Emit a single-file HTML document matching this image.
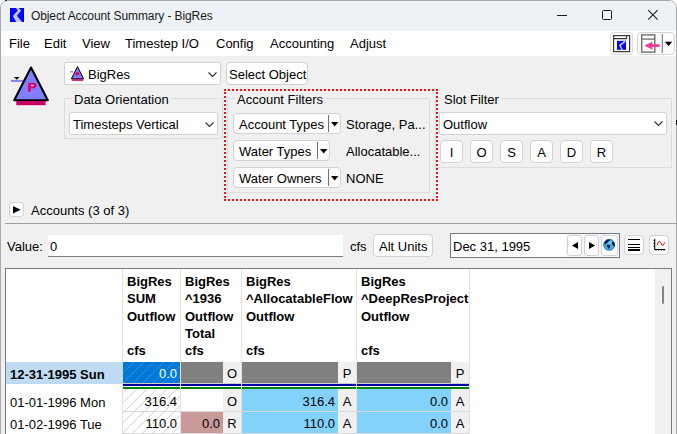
<!DOCTYPE html>
<html><head><meta charset="utf-8">
<style>
*{box-sizing:border-box;margin:0;padding:0}
html,body{width:677px;height:434px;overflow:hidden;background:#ffffff}
body{position:relative;font-family:"Liberation Sans",sans-serif;font-size:13px;color:#000}
.a{position:absolute}
.t{position:absolute;white-space:nowrap;line-height:16px}
#win{position:absolute;left:0;top:0;width:677px;height:460px;border:1px solid #aaaaaa;border-radius:8px 8px 0 0;overflow:hidden;background:#f0f0f0}
#title{position:absolute;left:0;top:0;width:677px;height:30px;background:#eef2f6}
#menu{position:absolute;left:0;top:30px;width:677px;height:25px;background:#ffffff}
.btn{position:absolute;background:#fdfdfd;border:1px solid #d2d2d2;border-radius:4px}
.cb{position:absolute;background:#ffffff;border:1px solid #d2d2d2;border-radius:2px}
.grp{position:absolute;border:1px solid #dcdcdc;}
.lbl{position:absolute;background:#f0f0f0;padding:0 2px;white-space:nowrap;line-height:16px}
.chev{position:absolute;width:9px;height:5px}
</style></head><body>
<div id="win">
  <div id="title"></div>
  <div id="menu"></div>
</div>
<div class="a" style="left:5px;top:0px;width:2px;height:1px;background:#222"></div>
<!-- title icon -->
<svg class="a" style="left:10px;top:8px" width="14" height="14" viewBox="0 0 14 14">
  <rect width="14" height="14" fill="#0000ff"/>
  <path d="M5.9 0 L8.7 0 L11.2 2.6 L6.9 7.7 L12.2 14 L6.2 14 L3.1 8.6 Q2.9 7.6 3.6 6.9 L7.8 2.6 Z" fill="#c4c4ff"/>
</svg>
<div class="t" style="left:31px;top:8px;font-size:12px;color:#1a1a1a;letter-spacing:-0.1px">Object Account Summary - BigRes</div>
<!-- window controls -->
<div class="a" style="left:557px;top:15px;width:10px;height:1px;background:#1a1a1a"></div>
<div class="a" style="left:602px;top:10px;width:10px;height:10px;border:1px solid #1a1a1a;border-radius:1.5px"></div>
<svg class="a" style="left:647px;top:9px" width="12" height="12" viewBox="0 0 12 12"><path d="M1.2 1.2 L10.6 10.6 M10.6 1.2 L1.2 10.6" stroke="#1a1a1a" stroke-width="1.05"/></svg>

<!-- menu -->
<div class="t" style="left:9px;top:36px">File</div>
<div class="t" style="left:44px;top:36px">Edit</div>
<div class="t" style="left:82px;top:36px">View</div>
<div class="t" style="left:125px;top:36px">Timestep I/O</div>
<div class="t" style="left:216px;top:36px">Config</div>
<div class="t" style="left:270px;top:36px">Accounting</div>
<div class="t" style="left:350px;top:36px">Adjust</div>

<!-- toolbar icons -->
<div class="a" style="left:610px;top:32px;width:23px;height:23px;border:1px solid #dedede;border-radius:3px;background:#fafafa"></div>
<svg class="a" style="left:613px;top:35px" width="18" height="18" viewBox="0 0 18 18">
  <rect x="0.6" y="0.6" width="16" height="16" fill="#fff" stroke="#3a3a3a" stroke-width="1.2"/>
  <path d="M0.6 3.6 H13.6 V0.6" fill="none" stroke="#3a3a3a" stroke-width="1.1"/>
  <rect x="4" y="5.8" width="9" height="9" fill="#0000ff"/>
  <path d="M10.5 5.6 L11.6 6.9 L6.9 10.3 L9.3 15" fill="none" stroke="#c8c8ff" stroke-width="1.5"/>
</svg>
<div class="a" style="left:637px;top:32px;width:38px;height:23px;border:1px solid #d4d4d4;border-radius:4px;background:#fbfbfb"></div>
<svg class="a" style="left:640px;top:34px" width="34" height="20" viewBox="0 0 34 20">
  <rect x="1.7" y="0.9" width="13.1" height="17.2" fill="#fff" stroke="#6e6e6e" stroke-width="1.4"/>
  <path d="M1.7 5.1 H14.8" stroke="#6e6e6e" stroke-width="1.3"/>
  <path d="M4.3 11.6 L12.4 7.8 L12.4 10.2 L19.6 10.2 L19.6 13.1 L12.4 13.1 L12.4 15.7 Z" fill="#e8409a"/>
  <path d="M22.3 0 V19" stroke="#7a7a7a" stroke-width="1.1"/>
  <path d="M24.8 7.8 L32.3 7.8 L28.55 12 Z" fill="#000"/>
</svg>

<!-- reservoir icon -->
<svg class="a" style="left:10px;top:62px" width="44" height="46" viewBox="0 0 44 46">
  <path d="M1 18.9 H13" stroke="#8080ff" stroke-width="2"/>
  <path d="M4 15 L9.5 15 L6.8 17.8 Z" fill="#000"/>
  <path d="M21 5.5 L37.8 38.2 L4.2 38.2 Z" fill="#8080ff" stroke="#000" stroke-width="2.1" stroke-linejoin="round"/>
  <rect x="6.3" y="39" width="29.3" height="4.2" fill="#cc0066"/>
  <path d="M18.1 20.7 H23.8 Q26.4 20.7 26.4 23.4 Q26.4 26.2 23.8 26.2 H20.8 V29.7 H18.1 Z" fill="#e0006a"/>
  <path d="M20.8 22.7 H23.2 Q24 22.7 24 23.5 Q24 24.3 23.2 24.3 H20.8 Z" fill="#e8e8ff"/>
</svg>

<!-- BigRes combobox -->
<div class="cb" style="left:64px;top:62px;width:157px;height:23px"></div>
<svg class="a" style="left:70px;top:66px" width="15" height="15" viewBox="0 0 15 15">
  <path d="M0 5.8 H3.2" stroke="#9090ff" stroke-width="1.4"/>
  <path d="M7.5 0.6 L13.6 12.8 L1.4 12.8 Z" fill="#8080ff" stroke="#000" stroke-width="1" stroke-linejoin="round"/>
  <rect x="1.8" y="13.2" width="11.4" height="1.6" fill="#cc0066"/>
  <path d="M6.3 10 V6.8 H8.4 Q9.3 7.4 8.4 8.4 H6.3" fill="none" stroke="#e0006a" stroke-width="1.2"/>
</svg>
<div class="t" style="left:88px;top:67px">BigRes</div>
<svg class="chev" style="left:208px;top:72px" viewBox="0 0 9 5"><path d="M0.5 0.5 L4.5 4.5 L8.5 0.5" fill="none" stroke="#383838" stroke-width="1.2"/></svg>

<div class="btn" style="left:226px;top:62px;width:82px;height:23px"></div>
<div class="t" style="left:229px;top:67px">Select Object</div>

<!-- Data Orientation group -->
<div class="grp" style="left:64px;top:98px;width:159px;height:41px"></div>
<div class="lbl" style="left:72px;top:92px">Data Orientation</div>
<div class="cb" style="left:69px;top:112px;width:149px;height:23px"></div>
<div class="t" style="left:73px;top:117px">Timesteps Vertical</div>
<svg class="chev" style="left:205px;top:122px" viewBox="0 0 9 5"><path d="M0.5 0.5 L4.5 4.5 L8.5 0.5" fill="none" stroke="#383838" stroke-width="1.2"/></svg>

<!-- red dotted -->
<div class="a" style="left:224px;top:89px;width:214px;height:112px;border:2px dotted #ff0a0a"></div>

<!-- Account Filters group -->
<div class="grp" style="left:227px;top:98px;width:203px;height:95px"></div>
<div class="lbl" style="left:235px;top:92px">Account Filters</div>

<div class="btn" style="left:233px;top:113px;width:108px;height:21px"></div>
<div class="t" style="left:239px;top:117px">Account Types</div>
<div class="a" style="left:328px;top:115px;width:1px;height:17px;background:#707070"></div>
<svg class="a" style="left:331px;top:122px" width="8" height="5" viewBox="0 0 8 5"><path d="M0 0 H7.4 L3.7 4.4 Z" fill="#000"/></svg>
<div class="t" style="left:346px;top:117px">Storage, Pa...</div>

<div class="btn" style="left:233px;top:140px;width:97px;height:21px"></div>
<div class="t" style="left:239px;top:144px">Water Types</div>
<div class="a" style="left:317px;top:142px;width:1px;height:17px;background:#707070"></div>
<svg class="a" style="left:320px;top:149px" width="8" height="5" viewBox="0 0 8 5"><path d="M0 0 H7.4 L3.7 4.4 Z" fill="#000"/></svg>
<div class="t" style="left:346px;top:144px">Allocatable...</div>

<div class="btn" style="left:233px;top:167px;width:108px;height:21px"></div>
<div class="t" style="left:239px;top:171px">Water Owners</div>
<div class="a" style="left:328px;top:169px;width:1px;height:17px;background:#707070"></div>
<svg class="a" style="left:331px;top:176px" width="8" height="5" viewBox="0 0 8 5"><path d="M0 0 H7.4 L3.7 4.4 Z" fill="#000"/></svg>
<div class="t" style="left:346px;top:171px">NONE</div>

<!-- Slot Filter group -->
<div class="grp" style="left:435px;top:98px;width:237px;height:70px"></div>
<div class="lbl" style="left:442px;top:92px">Slot Filter</div>
<div class="cb" style="left:439px;top:112px;width:228px;height:23px"></div>
<div class="t" style="left:443px;top:117px">Outflow</div>
<svg class="chev" style="left:654px;top:121px" viewBox="0 0 9 5"><path d="M0.5 0.5 L4.5 4.5 L8.5 0.5" fill="none" stroke="#383838" stroke-width="1.2"/></svg>
<div class="btn" style="left:440px;top:140px;width:23px;height:23px"></div><div class="t" style="left:440px;top:145px;width:23px;text-align:center">I</div>
<div class="btn" style="left:470px;top:140px;width:23px;height:23px"></div><div class="t" style="left:470px;top:145px;width:23px;text-align:center">O</div>
<div class="btn" style="left:500px;top:140px;width:23px;height:23px"></div><div class="t" style="left:500px;top:145px;width:23px;text-align:center">S</div>
<div class="btn" style="left:530px;top:140px;width:23px;height:23px"></div><div class="t" style="left:530px;top:145px;width:23px;text-align:center">A</div>
<div class="btn" style="left:560px;top:140px;width:23px;height:23px"></div><div class="t" style="left:560px;top:145px;width:23px;text-align:center">D</div>
<div class="btn" style="left:590px;top:140px;width:23px;height:23px"></div><div class="t" style="left:590px;top:145px;width:23px;text-align:center">R</div>

<!-- Accounts -->
<div class="btn" style="left:9px;top:202px;width:15px;height:15px;border-radius:3px"></div>
<svg class="a" style="left:13px;top:206px" width="8" height="8" viewBox="0 0 8 8"><path d="M0 0 L7.6 3.8 L0 7.6 Z" fill="#000"/></svg>
<div class="t" style="left:31px;top:203px">Accounts (3 of 3)</div>
<div class="a" style="left:5px;top:223px;width:672px;height:1px;background:#a0a0a0"></div>

<!-- Value row -->
<div class="t" style="left:7px;top:239px">Value:</div>
<div class="a" style="left:47px;top:234px;width:297px;height:23px;background:#fff;border:1px solid #eeeeee;border-bottom:1px solid #7c7c7c;border-radius:2px"></div>
<div class="t" style="left:50px;top:239px">0</div>
<div class="t" style="left:350px;top:239px">cfs</div>
<div class="btn" style="left:373px;top:234px;width:60px;height:23px"></div>
<div class="t" style="left:379px;top:239px">Alt Units</div>

<div class="a" style="left:450px;top:233px;width:170px;height:25px;background:#fff;border:1px solid #737b87"></div>
<div class="t" style="left:453px;top:239px">Dec 31, 1995</div>
<div class="a" style="left:566px;top:234px;width:53px;height:23px;background:#f6f6f6"></div>
<div class="btn" style="left:567px;top:235px;width:15px;height:21px;border-radius:3px"></div>
<svg class="a" style="left:572px;top:242px" width="6" height="7" viewBox="0 0 6 7"><path d="M6 0 L0 3.5 L6 7 Z" fill="#000"/></svg>
<div class="btn" style="left:584px;top:235px;width:15px;height:21px;border-radius:3px"></div>
<svg class="a" style="left:589px;top:242px" width="6" height="7" viewBox="0 0 6 7"><path d="M0 0 L6 3.5 L0 7 Z" fill="#000"/></svg>
<div class="btn" style="left:601px;top:235px;width:17px;height:21px;border-radius:3px"></div>
<svg class="a" style="left:603px;top:239px" width="12" height="12" viewBox="0 0 12 12">
  <circle cx="6.1" cy="5.8" r="5.9" fill="#3fb2d6"/>
  <path d="M4.5 2 Q7 1.2 9 2.4 Q9.6 4.6 8.4 5.6 Q6.4 5.4 5 4.4 Z" fill="#6cd4ea" opacity="0.8"/>
  <path d="M1.2 4.6 Q1.6 2.4 3.6 1.2 Q5.6 0.3 7.8 0.8 Q6.2 1.8 5.4 2.8 Q4 3.4 3.4 4.6 Q2.4 5.2 1.2 4.6 Z" fill="#0b0b52"/>
  <path d="M8.6 3.2 Q10.6 2.4 11.6 4.2 Q12.3 6.2 11.5 7.4 Q10.2 7 9.4 5.6 Q8.6 4.6 8.6 3.2 Z" fill="#0b0b52"/>
  <path d="M3.6 6 Q5.4 5.3 7.1 6.2 Q7.4 7.6 6.7 8.4 Q6.2 9.5 5.6 9.9 Q5.1 8.6 4.5 7.8 Q3.7 7 3.6 6 Z" fill="#0b0b52"/>
  <circle cx="6.1" cy="5.8" r="5.5" fill="none" stroke="#14206a" stroke-width="0.8" opacity="0.45"/>
</svg>
<div class="btn" style="left:624px;top:235px;width:20px;height:20px"></div>
<svg class="a" style="left:628px;top:239px" width="13" height="13" viewBox="0 0 13 13"><path d="M0 0.5 H12 M0 5.5 H12 M0 8.5 H12" stroke="#000" stroke-width="1.1"/><path d="M0 11 H12" stroke="#000" stroke-width="2"/></svg>
<div class="btn" style="left:649px;top:235px;width:20px;height:20px"></div>
<svg class="a" style="left:653px;top:238px" width="14" height="14" viewBox="0 0 14 14">
  <path d="M1.7 0.9 V11.5 H12.2" fill="none" stroke="#000" stroke-width="1.1"/>
  <path d="M0.4 2.5 H1.7 M0.4 5.4 H1.7 M0.4 8.2 H1.7 M3.1 11.5 V12.7 M5.8 11.5 V12.7 M8.5 11.5 V12.7 M11.2 11.5 V12.7" stroke="#000" stroke-width="0.8"/>
  <path d="M4.3 6.9 Q5.4 2.4 6.8 3.5 Q7.8 4.4 9 7.2 Q10.3 8.4 11.8 4.2" fill="none" stroke="#e01010" stroke-width="1"/>
</svg>

<div class="a" style="left:676px;top:120px;width:1px;height:5px;background:#111"></div>
<!-- table -->
<div class="a" style="left:5px;top:268px;width:667px;height:170px;background:#fff;border:1px solid #747982"></div>
<!-- grid verticals header -->
<div class="a" style="left:122px;top:269px;width:1px;height:165px;background:#e2e2e2"></div>
<div class="a" style="left:180px;top:269px;width:1px;height:165px;background:#e2e2e2"></div>
<div class="a" style="left:241px;top:269px;width:1px;height:165px;background:#e2e2e2"></div>
<div class="a" style="left:356px;top:269px;width:1px;height:165px;background:#e2e2e2"></div>
<div class="a" style="left:469px;top:269px;width:1px;height:165px;background:#e2e2e2"></div>
<!-- header text -->
<div class="t" style="left:127px;top:273px;line-height:17.3px;font-weight:bold">BigRes<br>SUM<br>Outflow<br><br>cfs</div>
<div class="t" style="left:185px;top:273px;line-height:17.3px;font-weight:bold">BigRes<br>^1936<br>Outflow<br>Total<br>cfs</div>
<div class="t" style="left:246px;top:273px;line-height:17.3px;font-weight:bold">BigRes<br>^AllocatableFlow<br>Outflow<br><br>cfs</div>
<div class="t" style="left:361px;top:273px;line-height:17.3px;font-weight:bold">BigRes<br>^DeepResProject<br>Outflow<br><br>cfs</div>
<!-- row 1 -->
<div class="a" style="left:6px;top:362px;width:117px;height:22px;background:#bfdbf3"></div>
<div class="t" style="left:10px;top:367px;font-weight:bold">12-31-1995 Sun</div>
<svg class="a" style="left:0;top:0" width="677" height="434" viewBox="0 0 677 434">
<defs>
<pattern id="hw" patternUnits="userSpaceOnUse" width="10" height="10"><rect width="10" height="10" fill="#fff"/><path d="M-2 7.8 L7.8 -2 M3.8 12 L12 3.8" stroke="#cdcdcd" stroke-width="1"/></pattern>
<pattern id="hb" patternUnits="userSpaceOnUse" width="10" height="10"><rect width="10" height="10" fill="#0078d4"/><path d="M-2 7.8 L7.8 -2 M3.8 12 L12 3.8" stroke="#2a90f4" stroke-width="1"/></pattern>
</defs>
<rect x="123" y="362" width="57" height="21" fill="url(#hb)"/>
<rect x="123" y="389" width="57" height="22" fill="url(#hw)"/>
<rect x="123" y="412" width="57" height="21" fill="url(#hw)"/>
</svg>
<div class="t" style="left:123px;top:366px;width:54px;text-align:right;color:#fff">0.0</div>
<div class="a" style="left:181px;top:362px;width:42px;height:21px;background:#808080"></div>
<div class="a" style="left:223px;top:362px;width:18px;height:21px;background:#f0f0f0"></div>
<div class="t" style="left:223px;top:366px;width:18px;text-align:center">O</div>
<div class="a" style="left:242px;top:362px;width:96px;height:21px;background:#808080"></div>
<div class="a" style="left:338px;top:362px;width:18px;height:21px;background:#f0f0f0"></div>
<div class="t" style="left:338px;top:366px;width:18px;text-align:center">P</div>
<div class="a" style="left:357px;top:362px;width:94px;height:21px;background:#808080"></div>
<div class="a" style="left:451px;top:362px;width:18px;height:21px;background:#f0f0f0"></div>
<div class="t" style="left:451px;top:366px;width:18px;text-align:center">P</div>
<!-- double line -->
<div class="a" style="left:123px;top:383px;width:346px;height:1px;background:#d0d0d0"></div>
<div class="a" style="left:123px;top:384px;width:57px;height:2px;background:#0000a0"></div>
<div class="a" style="left:123px;top:387px;width:57px;height:2px;background:#008000"></div>
<div class="a" style="left:181px;top:384px;width:60px;height:2px;background:#0000a0"></div>
<div class="a" style="left:181px;top:387px;width:60px;height:2px;background:#008000"></div>
<div class="a" style="left:242px;top:384px;width:114px;height:2px;background:#0000a0"></div>
<div class="a" style="left:242px;top:387px;width:114px;height:2px;background:#008000"></div>
<div class="a" style="left:357px;top:384px;width:112px;height:2px;background:#0000a0"></div>
<div class="a" style="left:357px;top:387px;width:112px;height:2px;background:#008000"></div>
<!-- row 2 -->
<div class="t" style="left:10px;top:395px">01-01-1996 Mon</div>

<div class="t" style="left:123px;top:394px;width:54px;text-align:right">316.4</div>
<div class="a" style="left:223px;top:389px;width:18px;height:22px;background:#f0f0f0"></div>
<div class="t" style="left:223px;top:394px;width:18px;text-align:center">O</div>
<div class="a" style="left:242px;top:389px;width:96px;height:22px;background:#82d2fb"></div>
<div class="t" style="left:242px;top:394px;width:93px;text-align:right">316.4</div>
<div class="a" style="left:338px;top:389px;width:18px;height:22px;background:#f0f0f0"></div>
<div class="t" style="left:338px;top:394px;width:18px;text-align:center">A</div>
<div class="a" style="left:357px;top:389px;width:94px;height:22px;background:#82d2fb"></div>
<div class="t" style="left:357px;top:394px;width:91px;text-align:right">0.0</div>
<div class="a" style="left:451px;top:389px;width:18px;height:22px;background:#f0f0f0"></div>
<div class="t" style="left:451px;top:394px;width:18px;text-align:center">A</div>
<!-- row grid line -->
<div class="a" style="left:123px;top:411px;width:346px;height:1px;background:#d8d8d8"></div>
<!-- row 3 -->
<div class="t" style="left:10px;top:417px">01-02-1996 Tue</div>

<div class="t" style="left:123px;top:416px;width:54px;text-align:right">110.0</div>
<div class="a" style="left:181px;top:412px;width:42px;height:22px;background:#c89a9a"></div>
<div class="t" style="left:181px;top:416px;width:39px;text-align:right">0.0</div>
<div class="a" style="left:223px;top:412px;width:18px;height:22px;background:#f0f0f0"></div>
<div class="t" style="left:223px;top:416px;width:18px;text-align:center">R</div>
<div class="a" style="left:242px;top:412px;width:96px;height:22px;background:#82d2fb"></div>
<div class="t" style="left:242px;top:416px;width:93px;text-align:right">110.0</div>
<div class="a" style="left:338px;top:412px;width:18px;height:22px;background:#f0f0f0"></div>
<div class="t" style="left:338px;top:416px;width:18px;text-align:center">A</div>
<div class="a" style="left:357px;top:412px;width:94px;height:22px;background:#82d2fb"></div>
<div class="t" style="left:357px;top:416px;width:91px;text-align:right">0.0</div>
<div class="a" style="left:451px;top:412px;width:18px;height:22px;background:#f0f0f0"></div>
<div class="t" style="left:451px;top:416px;width:18px;text-align:center">A</div>
<div class="a" style="left:123px;top:433px;width:346px;height:1px;background:#d8d8d8"></div>
<!-- scrollbar -->
<div class="a" style="left:655px;top:269px;width:16px;height:165px;background:#f0f0f0"></div>
<div class="a" style="left:662px;top:286px;width:2px;height:18px;background:#858585;border-radius:1px"></div>
</body></html>
